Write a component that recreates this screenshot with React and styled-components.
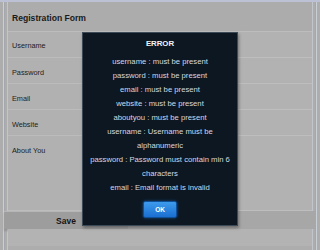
import React from "react";
import styled, { createGlobalStyle } from "styled-components";

const Global = createGlobalStyle`
  html, body { margin: 0; padding: 0; background: #aaaaab; }
  body { font-family: "Liberation Sans", Arial, sans-serif; }
`;

const Screen = styled.div`
  position: relative;
  width: 320px;
  height: 250px;
  overflow: hidden;
  background: #adadae;
  border-top: 2px solid #bcc1d6;
  box-sizing: border-box;
  display: flex;
  flex-direction: column;
`;

const Panel = styled.div`
  margin: 0 3px 0 3px;
  border-left: 1px solid #c9cfd6;
  border-right: 1px solid #c9cfd6;
  padding: 0 3px;
  flex: 1;
  display: flex;
  flex-direction: column;
  box-shadow: inset 1px 0 0 #a4a8ae, inset -1px 0 0 #a4a8ae;
`;

const Inner = styled.div`
  border-left: 1px solid #c2c6cc;
  border-right: 1px solid #c2c6cc;
  flex: 1;
  display: flex;
  flex-direction: column;
`;

const Header = styled.div`
  height: 30px;
  display: flex;
  align-items: center;
  padding: 2px 0 0 4px;
  box-sizing: border-box;
  font-size: 8.6px;
  color: #1a1a1a;
  font-weight: 600;
  border-bottom: 1px solid #bdbdbd;
  background: #acacac;
`;

const Row = styled.div`
  display: grid;
  grid-template-columns: 74px 1fr;
  height: ${(p) => p.h}px;
`;

const Label = styled.div`
  padding: ${(p) => p.pt}px 0 0 4px;
  font-size: 7.3px;
  color: #222222;
  background: #b1b1b1;
  border-bottom: 1px solid #bcbcbc;
`;

const Field = styled.div`
  background: #b2b2b2;
  border-bottom: 1px solid #bebebe;
  border-left: 1px solid #a6a6a6;
`;

const Footer = styled.div`
  display: flex;
  height: 18px;
  margin: 0 -4px;
`;

const SaveBar = styled.div`
  width: 124px;
  display: flex;
  align-items: center;
  justify-content: center;
  background: #9d9d9e;
  border-top: 1px solid #b6b6b6;
  box-shadow: 0 2px 2px rgba(0, 0, 0, 0.15);
  font-size: 8.5px;
  font-weight: bold;
  color: #151515;
`;

const FooterRest = styled.div`
  flex: 1;
  background: #a7a7a8;
`;

const Bottom = styled.div`
  height: 17px;
  background: #b3b3b4;
`;

const Dialog = styled.div`
  position: absolute;
  left: 82px;
  top: 30px;
  width: 156px;
  height: 194px;
  box-sizing: border-box;
  background: #0c1722;
  border: 1px solid #3c4a58;
  box-shadow: 1px 2px 3px rgba(0, 0, 0, 0.35);
  display: flex;
  flex-direction: column;
  align-items: center;
  padding-top: 4px;
`;

const Title = styled.div`
  font-size: 7.8px;
  font-weight: bold;
  color: #f2f4f6;
  line-height: 14px;
  margin-bottom: 4px;
`;

const Messages = styled.div`
  font-size: 7.7px;
  line-height: 14px;
  color: #d3dae1;
  text-align: center;
  white-space: pre-line;
`;

const OkButton = styled.button`
  margin-top: 6px;
  width: 34px;
  height: 17px;
  border: 1px solid #0f4f96;
  border-radius: 2px;
  background: linear-gradient(#3d9bec, #1a6fd0);
  color: #ffffff;
  font-family: "Liberation Sans", Arial, sans-serif;
  font-size: 6.5px;
  font-weight: bold;
  padding: 0;
  box-shadow: 0 0 3px rgba(40, 130, 230, 0.5);
`;

const rows = [
  { label: "Username", h: 26, pt: 9 },
  { label: "Password", h: 26, pt: 10 },
  { label: "Email", h: 26, pt: 10 },
  { label: "Website", h: 26, pt: 10 },
  { label: "About You", h: 75, pt: 10 },
];

const messages = [
  "username : must be present",
  "password : must be present",
  "email : must be present",
  "website : must be present",
  "aboutyou : must be present",
  "username : Username must be\nalphanumeric",
  "password : Password must contain min 6\ncharacters",
  "email : Email format is invalid",
];

export default function App() {
  return (
    <>
      <Global />
      <Screen>
        <Panel>
          <Inner>
            <Header>Registration Form</Header>
            {rows.map((r) => (
              <Row key={r.label} h={r.h}>
                <Label pt={r.pt}>{r.label}</Label>
                <Field />
              </Row>
            ))}
            <Footer>
              <SaveBar>Save</SaveBar>
              <FooterRest />
            </Footer>
            <Bottom />
          </Inner>
        </Panel>
        <Dialog>
          <Title>ERROR</Title>
          <Messages>{messages.join("\n")}</Messages>
          <OkButton>OK</OkButton>
        </Dialog>
      </Screen>
    </>
  );
}
